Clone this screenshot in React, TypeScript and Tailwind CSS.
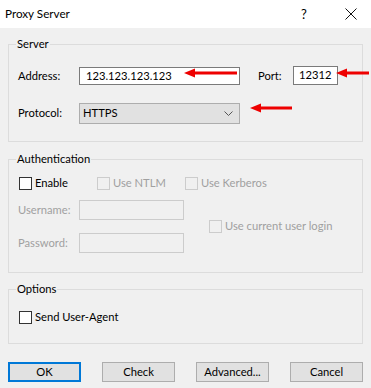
import React from "react"

const font = { fontFamily: 'Lato, "Noto Sans", sans-serif' }

function Group({ title, className, children }: { title: string; className?: string; children: React.ReactNode }) {
  return (
    <div className={`relative border border-[#dcdcdc] ${className ?? ""}`}>
      <span className="absolute -top-[9px] left-[7px] bg-[#f0f0f0] px-px leading-[16px]">{title}</span>
      {children}
    </div>
  )
}

function Check({ label, disabled, className }: { label: string; disabled?: boolean; className?: string }) {
  return (
    <div className={`flex items-center gap-[3px] ${className ?? ""}`}>
      <span className={`w-[13px] h-[13px] border ${disabled ? "border-[#cccccc] bg-[#f0f0f0]" : "border-[#333333] bg-white"}`} />
      <span className={disabled ? "text-[#a0a0a0]" : "text-black"}>{label}</span>
    </div>
  )
}

function Arrow({ x, y, w }: { x: number; y: number; w: number }) {
  return (
    <svg className="absolute" style={{ left: x, top: y - 5 }} width={w} height={10} viewBox={`0 0 ${w} 10`}>
      <polygon points="0,5 11,0.5 11,9.5" fill="#ee0000" />
      <rect x={9} y={3.5} width={w - 9} height={3} fill="#ee0000" />
    </svg>
  )
}

export default function App() {
  return (
    <div className="relative w-[371px] h-[388px] bg-[#f0f0f0] text-[11.2px] text-black overflow-hidden" style={font}>
      {/* title bar */}
      <div className="h-[28px] bg-white flex items-center pl-[5px]">
        <span className="flex-1 text-[11.7px] leading-none">Proxy Server</span>
        <span className="w-[10px] text-[13px] mr-[34px] leading-none">?</span>
        <svg width="12" height="12" viewBox="0 0 12 12" className="mr-[14px]">
          <path d="M0.5 0.5 L11.5 11.5 M11.5 0.5 L0.5 11.5" stroke="#111" strokeWidth="1" />
        </svg>
      </div>

      <div className="px-[8px] pt-[16px]">
        <Group title="Server" className="h-[98px] pt-[22px] pl-[9px]">
          <div className="flex items-center h-[18px]">
            <span className="w-[61px]">Address:</span>
            <div className="w-[161px] h-[18px] border border-[#7a7a7a] bg-white flex items-center pl-[6px]">123.123.123.123</div>
            <span className="ml-[18px] w-[35px]">Port:</span>
            <div className="w-[45px] h-[19px] -mt-[1px] border border-[#7a7a7a] bg-white flex items-center pl-[5px]">12312</div>
          </div>
          <div className="flex items-center h-[21px] mt-[18px]">
            <span className="w-[61px]">Protocol:</span>
            <div className="w-[161px] h-[21px] border border-[#adadad] bg-[#e1e1e1] flex items-center pl-[3px] pr-[6px]">
              <span className="flex-1">HTTPS</span>
              <svg width="9" height="5" viewBox="0 0 9 5">
                <path d="M0.5 0.5 L4.5 4.5 L8.5 0.5" stroke="#555" fill="none" strokeWidth="1" />
              </svg>
            </div>
          </div>
        </Group>

        <Group title="Authentication" className="h-[114px] mt-[17px] pt-[17px] pl-[10px]">
          <div className="flex items-center h-[13px]">
            <Check label="Enable" className="w-[78px]" />
            <Check label="Use NTLM" disabled className="w-[88px]" />
            <Check label="Use Kerberos" disabled />
          </div>
          <div className="flex items-center mt-[10px] -ml-[1px]">
            <div className="flex flex-col gap-[13px]">
              <div className="flex items-center">
                <span className="w-[61px] text-[#a0a0a0]">Username:</span>
                <div className="w-[105px] h-[20px] border border-[#cccccc] bg-[#f0f0f0]" />
              </div>
              <div className="flex items-center">
                <span className="w-[61px] text-[#a0a0a0]">Password:</span>
                <div className="w-[105px] h-[20px] border border-[#cccccc] bg-[#f0f0f0]" />
              </div>
            </div>
            <Check label="Use current user login" disabled className="ml-[25px]" />
          </div>
        </Group>

        <Group title="Options" className="h-[55px] mt-[16px] pt-[19px] pl-[10px]">
          <Check label="Send User-Agent" />
        </Group>

        <div className="flex justify-between mt-[18px]">
          <button className="w-[73px] h-[20px] border-2 border-[#0078d7] bg-[#e1e1e1] leading-none">OK</button>
          <button className="w-[73px] h-[20px] border border-[#adadad] bg-[#e1e1e1] leading-none">Check</button>
          <button className="w-[73px] h-[20px] border border-[#adadad] bg-[#e1e1e1] leading-none">Advanced...</button>
          <button className="w-[73px] h-[20px] border border-[#adadad] bg-[#e1e1e1] leading-none">Cancel</button>
        </div>
      </div>

      <Arrow x={184} y={73} w={53} />
      <Arrow x={336} y={73} w={33} />
      <Arrow x={250} y={108} w={42} />
    </div>
  )
}
